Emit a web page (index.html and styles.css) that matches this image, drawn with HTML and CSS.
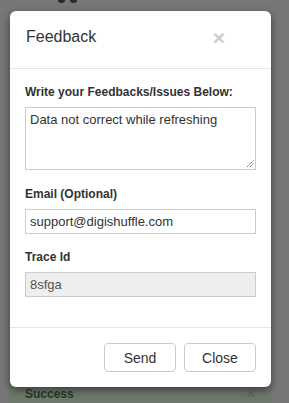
FILE: index.html
```html
<!DOCTYPE html>
<html>
<head>
<meta charset="utf-8">
<link rel="stylesheet" href="styles.css">
</head>
<body>
<div class="page">
  <div class="top-glyphs"><span class="dot"></span><span class="dot"></span></div>
  <div class="alert">
    <span class="alert-text">Success</span>
    <span class="alert-close">×</span>
  </div>
</div>
<div class="modal">
  <div class="modal-header">
    <span class="modal-title">Feedback</span>
    <span class="close">×</span>
  </div>
  <div class="modal-body">
    <div class="group g1">
      <label class="label">Write your Feedbacks/Issues Below:</label>
      <div class="textarea">Data not correct while refreshing
        <svg class="grip" width="8" height="8" viewBox="0 0 8 8"><path d="M7.5 0.5L0.5 7.5M7.5 3.5L3.5 7.5" stroke="#444" stroke-width="1" stroke-dasharray="1 1" fill="none"/></svg>
      </div>
    </div>
    <div class="group g2">
      <label class="label">Email (Optional)</label>
      <div class="input">support@digishuffle.com</div>
    </div>
    <div class="group g3">
      <label class="label">Trace Id</label>
      <div class="input readonly">8sfga</div>
    </div>
  </div>
  <div class="modal-footer">
    <button class="btn">Send</button>
    <button class="btn">Close</button>
  </div>
</div>
</body>
</html>
```
FILE: styles.css
```css
html, body {
  margin: 0;
  padding: 0;
}
body {
  background: #777;
  width: 289px;
  height: 403px;
  overflow: hidden;
  position: relative;
  font-family: "Liberation Sans", Arial, sans-serif;
}
.page {
  display: flex;
  flex-direction: column;
}
.top-glyphs {
  display: flex;
  gap: 5px;
  padding-left: 58px;
  height: 3px;
}
.dot {
  width: 7px;
  height: 3px;
  border-radius: 0 0 4px 4px;
  background: #2a2a2a;
}
.alert {
  margin: 381px 0 0 9px;
  width: 263px;
  height: 19px;
  overflow: hidden;
  background: #6f786c;
  display: flex;
  justify-content: space-between;
  padding: 0 16px;
  box-sizing: border-box;
}
.alert-text {
  color: #213d21;
  font-weight: bold;
  font-size: 12px;
  line-height: 14px;
  padding-top: 3px;
}
.alert-close {
  color: #616b5e;
  font-weight: bold;
  font-size: 17px;
  line-height: 14px;
  padding-top: 3px;
}
.modal {
  position: absolute;
  left: 10px;
  top: 11px;
  width: 261px;
  background: #fff;
  border-radius: 6px;
  box-shadow: 0 3px 9px rgba(0, 0, 0, 0.5);
  color: #333;
}
.modal-header {
  height: 57px;
  border-bottom: 1px solid #e5e5e5;
  display: flex;
  align-items: flex-start;
  padding: 0 46px 0 16px;
}
.modal-title {
  font-size: 16px;
  line-height: 20px;
  margin-top: 16px;
  flex: 1;
  color: #333;
}
.close {
  font-size: 21px;
  font-weight: bold;
  line-height: 21px;
  color: #000;
  opacity: 0.2;
  margin-top: 16px;
}
.modal-body {
  padding: 15px 15px 15px;
}
.group {
  display: flex;
  flex-direction: column;
}
.g1 {
  margin-bottom: 16px;
}
.g2 {
  margin-bottom: 15px;
}
.g3 {
  margin-bottom: 15px;
}
.label {
  font-weight: bold;
  font-size: 12px;
  line-height: 17px;
  margin-bottom: 6px;
  color: #333;
}
.textarea, .input {
  border: 1px solid #ccc;
  box-sizing: border-box;
  font-size: 13px;
  color: #333;
}
.textarea {
  height: 63px;
  padding: 4px 4px;
  line-height: 16px;
  position: relative;
}
.grip {
  position: absolute;
  right: 1px;
  bottom: 1px;
}
.input {
  height: 25px;
  line-height: 23px;
  padding: 0 4px;
}
.readonly {
  background: #eee;
  color: #555;
}
.modal-footer {
  border-top: 1px solid #e5e5e5;
  padding: 15px;
  display: flex;
  justify-content: flex-end;
  gap: 8px;
}
.btn {
  width: 72px;
  height: 29px;
  background: #fff;
  border: 1px solid #ccc;
  border-radius: 4px;
  font-family: "Liberation Sans", Arial, sans-serif;
  font-size: 14px;
  color: #333;
  padding: 0;
}
```
